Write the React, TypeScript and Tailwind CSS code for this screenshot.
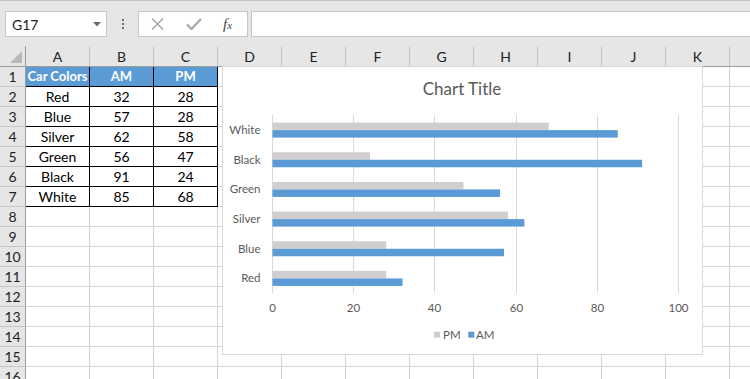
const COLS = ["A", "B", "C", "D", "E", "F", "G", "H", "I", "J", "K", "L"];
const ROWS = Array.from({ length: 16 }, (_, i) => i + 1);

const DATA: string[][] = [
  ["Car Colors", "AM", "PM"],
  ["Red", "32", "28"],
  ["Blue", "57", "28"],
  ["Silver", "62", "58"],
  ["Green", "56", "47"],
  ["Black", "91", "24"],
  ["White", "85", "68"],
];

// chart categories, top to bottom as Excel draws a bar chart
const SERIES = [
  { name: "White", am: 85, pm: 68 },
  { name: "Black", am: 91, pm: 24 },
  { name: "Green", am: 56, pm: 47 },
  { name: "Silver", am: 62, pm: 58 },
  { name: "Blue", am: 57, pm: 28 },
  { name: "Red", am: 32, pm: 28 },
];

const FONT = "font-['Lato','Liberation_Sans',sans-serif]";

function FormulaBar() {
  return (
    <div className="flex h-[46px] shrink-0 items-start border-t border-[#c4c4c4] bg-[#e6e6e6] pt-[10px]">
      <div className="ml-[5px] flex h-[26px] w-[102px] items-center justify-between border border-[#c6c6c6] bg-white pl-[6px] pr-[5px] text-[14px] text-[#222]">
        <span>G17</span>
        <svg width="8" height="5" viewBox="0 0 8 5">
          <path d="M0 0h8L4 4.5z" fill="#6a6a6a" />
        </svg>
      </div>
      <div className="flex h-[26px] w-[31px] flex-col items-center justify-center gap-[2px]">
        <span className="h-[2px] w-[2px] bg-[#6d6d6d]" />
        <span className="h-[2px] w-[2px] bg-[#6d6d6d]" />
        <span className="h-[2px] w-[2px] bg-[#6d6d6d]" />
      </div>
      <div className="flex h-[26px] w-[110px] items-center border border-[#c6c6c6] bg-white">
        <svg className="ml-[12px]" width="13" height="12" viewBox="0 0 13 12">
          <path d="M1 0.5l11 11M12 0.5l-11 11" stroke="#a8a8a8" strokeWidth="1.5" />
        </svg>
        <svg className="ml-[22px]" width="16" height="12" viewBox="0 0 16 12">
          <path d="M1 6.5l4.5 4.5L15 1" stroke="#a8a8a8" strokeWidth="2.2" fill="none" />
        </svg>
        <span className="ml-[21px] font-['Liberation_Serif',serif] text-[15px] italic leading-none text-[#444]">
          f<span className="text-[11px]">x</span>
        </span>
      </div>
      <div className="ml-[3px] h-[26px] flex-1 border border-r-0 border-[#c6c6c6] bg-white" />
    </div>
  );
}

function HeaderRow() {
  return (
    <div className="flex h-[21px] shrink-0 border-b border-[#9b9b9b] bg-[#e6e6e6]">
      <div className="relative w-[26px] shrink-0 border-r border-[#9b9b9b]">
        <svg className="absolute bottom-[3px] right-[3px]" width="12" height="12" viewBox="0 0 12 12">
          <path d="M12 0V12H0z" fill="#b9b9b9" />
        </svg>
      </div>
      {COLS.map((c) => (
        <div key={c} className="flex w-[64px] shrink-0 items-center justify-center pt-[1px] text-[14px] text-[#222]">
          {/* L sits past the window edge; only its column line shows */}
          <div className="flex-1 text-center">{c === "L" ? "" : c}</div>
          <div className="h-[19px] w-px self-end bg-[#c0c0c0]" />
        </div>
      ))}
    </div>
  );
}

function Cell({ row, col }: { row: number; col: number }) {
  const inTable = row <= 7 && col <= 2;
  const value = inTable ? DATA[row - 1][col] : "";
  const head = row === 1 && inTable;
  return (
    <div
      className={[
        "flex w-[64px] shrink-0 items-center justify-center border-b border-r",
        inTable ? "border-black" : "border-[#d4d4d4]",
        head ? "bg-[#5b9bd5] text-[13px] font-bold text-white" : "text-[14px] text-black",
      ].join(" ")}
    >
      {value}
    </div>
  );
}

function Grid() {
  return (
    <div className="flex flex-col">
      {ROWS.map((r) => (
        <div key={r} className="flex h-[20px] shrink-0">
          <div className="flex w-[26px] shrink-0 items-center justify-center border-b border-r border-b-[#c6c6c6] border-r-[#9b9b9b] bg-[#e6e6e6] text-[14px] text-[#222]">
            {r}
          </div>
          {COLS.map((c, ci) => (
            <Cell key={c} row={r} col={ci} />
          ))}
        </div>
      ))}
    </div>
  );
}

function BarChart() {
  const x0 = 49.5;
  const scale = 4.062;
  const top = 48;
  const bottom = 226;
  const band = (bottom - top) / SERIES.length;
  const ticks = [0, 20, 40, 60, 80, 100];
  return (
    <div className="absolute left-[222px] top-[66px] h-[289px] w-[481px] border border-[#d9d9d9] bg-white">
      <svg width="479" height="287" viewBox="0 0 479 287" className={FONT}>
        <text x="239" y="28" textAnchor="middle" fontSize="17" fill="#595959">
          Chart Title
        </text>
        {ticks.map((t) => {
          const x = Math.round(x0 + t * scale - 0.5) + 0.5;
          return (
            <g key={t}>
              <line x1={x} x2={x} y1={top} y2={bottom} stroke="#d9d9d9" strokeWidth="1" />
              <text x={x} y="245" textAnchor="middle" fontSize="11.5" fill="#595959">
                {t}
              </text>
            </g>
          );
        })}
        {SERIES.map((s, i) => {
          const y = top + i * band;
          return (
            <g key={s.name}>
              <rect x={x0} y={y + 7.6} width={s.pm * scale} height={7.5} fill="#d0cece" />
              <rect x={x0} y={y + 15.1} width={s.am * scale} height={7.5} fill="#5b9bd5" />
              <text x="37.5" y={y + band / 2 + 4.3} textAnchor="end" fontSize="11.5" fill="#595959">
                {s.name}
              </text>
            </g>
          );
        })}
        <rect x="211" y="264.7" width="6" height="6" fill="#d0cece" />
        <text x="220" y="272" fontSize="11.5" fill="#595959">
          PM
        </text>
        <rect x="245.3" y="264.7" width="6" height="6" fill="#5b9bd5" />
        <text x="253" y="272" fontSize="11.5" fill="#595959">
          AM
        </text>
      </svg>
    </div>
  );
}

export default function App() {
  return (
    <div className={`relative h-[379px] w-[750px] overflow-hidden bg-white ${FONT}`}>
      <FormulaBar />
      <HeaderRow />
      <Grid />
      <BarChart />
    </div>
  );
}
